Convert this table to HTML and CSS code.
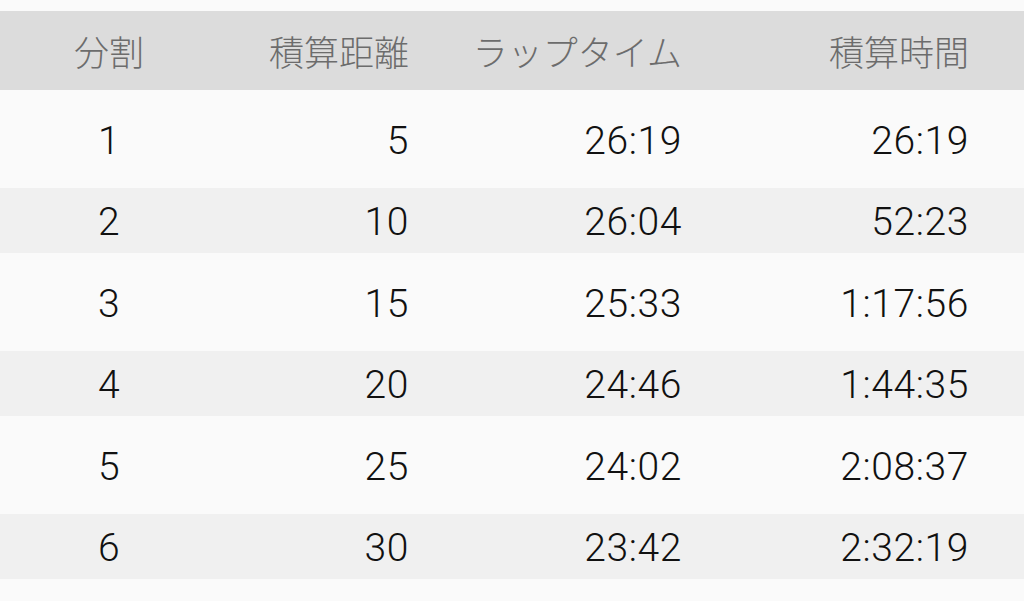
FILE: index.html
```html
<!DOCTYPE html>
<html lang="ja">
<head>
<meta charset="utf-8">
<title>スプリット</title>
<link rel="stylesheet" href="styles.css">
</head>
<body>
<div class="table">
  <div class="row head">
    <div class="c1">分割</div>
    <div class="c2">積算距離</div>
    <div class="c3">ラップタイム</div>
    <div class="c4">積算時間</div>
  </div>
  <div class="row odd"><div class="c1">1</div><div class="c2">5</div><div class="c3">26:19</div><div class="c4">26:19</div></div>
  <div class="row even"><div class="c1">2</div><div class="c2">10</div><div class="c3">26:04</div><div class="c4">52:23</div></div>
  <div class="row odd"><div class="c1">3</div><div class="c2">15</div><div class="c3">25:33</div><div class="c4">1:17:56</div></div>
  <div class="row even"><div class="c1">4</div><div class="c2">20</div><div class="c3">24:46</div><div class="c4">1:44:35</div></div>
  <div class="row odd"><div class="c1">5</div><div class="c2">25</div><div class="c3">24:02</div><div class="c4">2:08:37</div></div>
  <div class="row even"><div class="c1">6</div><div class="c2">30</div><div class="c3">23:42</div><div class="c4">2:32:19</div></div>
</div>
</body>
</html>
```
FILE: styles.css
```css
html, body {
  margin: 0;
  padding: 0;
  background: #fafafa;
}
body {
  width: 1024px;
  height: 601px;
  overflow: hidden;
}
.table {
  padding-top: 11px;
}
.row {
  display: grid;
  grid-template-columns: 218px 190px 273px 287px;
  align-items: center;
  font-family: Roboto, "Liberation Sans", Arial, sans-serif;
  font-weight: 300;
  font-size: 39px;
  letter-spacing: 0.6px;
  color: #111111;
}
.row .c1 { text-align: center; }
.row .c2, .row .c3, .row .c4 { text-align: right; margin-right: -1px; }
.odd > div, .even > div { padding-top: 3px; }
.head {
  height: 79px;
  background: #dcdcdc;
  font-family: "Noto Sans CJK JP", "Noto Sans", sans-serif;
  font-size: 35px;
  font-weight: 300;
  letter-spacing: 0;
  color: #6c6c6c;
}
.odd {
  height: 98px;
  background: #fafafa;
}
.even {
  height: 65px;
  background: #f0f0f0;
}
```
